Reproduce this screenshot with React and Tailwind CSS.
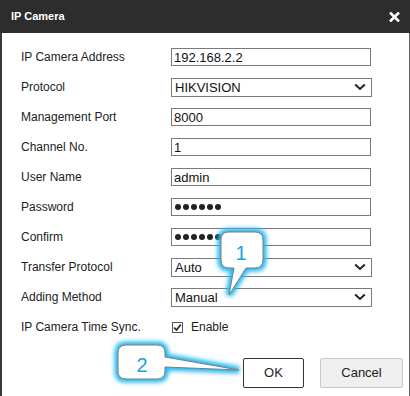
import React from "react";

const Chevron = () => (
  <svg width="12" height="8" viewBox="0 0 12 8" className="absolute right-[5px] top-1/2 -translate-y-1/2">
    <path d="M1.2 1.5 L6 6 L10.8 1.5" fill="none" stroke="#222" strokeWidth="2" />
  </svg>
);

const Input = ({ children }) => (
  <div className="w-[200px] h-[18px] border border-[#7a7a7a] bg-white flex items-center pl-[2px] text-[13px] text-[#111] leading-none">
    {children}
  </div>
);

const Select = ({ children }) => (
  <div className="relative w-[201px] h-[19px] border border-[#7a7a7a] bg-white flex items-center pl-[3px] text-[13px] text-[#111] leading-none">
    {children}
    <Chevron />
  </div>
);

const Dots = () => (
  <div className="flex gap-[2px] pl-[1px]">
    {[0, 1, 2, 3, 4, 5].map((i) => (
      <div key={i} className="w-[6px] h-[6px] rounded-full bg-[#222]" />
    ))}
  </div>
);

const Row = ({ label, children }) => (
  <div className="h-[30px] flex items-center">
    <div className="w-[169px] shrink-0 pl-[19px] text-[12px] text-[#222]">{label}</div>
    {children}
  </div>
);

export default function App() {
  return (
    <div
      className="relative w-[410px] h-[396px] overflow-hidden bg-white"
      style={{ fontFamily: '"Liberation Sans", Arial, sans-serif' }}
    >
      <div className="h-[33px] bg-[#2d2d2d] flex items-center justify-between pl-[11px] pr-[10px]">
        <span className="text-white font-bold text-[11px]">IP Camera</span>
        <svg width="11" height="10" viewBox="0 0 11 10">
          <path d="M1 0.5 L10 9.5 M10 0.5 L1 9.5" stroke="white" strokeWidth="2.6" />
        </svg>
      </div>
      <div className="h-[363px] border-l-2 border-l-[#3a3a3a] border-r border-r-[#666] pt-[9px] flex flex-col">
        <Row label="IP Camera Address"><Input>192.168.2.2</Input></Row>
        <Row label="Protocol"><Select>HIKVISION</Select></Row>
        <Row label="Management Port"><Input>8000</Input></Row>
        <Row label="Channel No."><Input>1</Input></Row>
        <Row label="User Name"><Input>admin</Input></Row>
        <Row label="Password"><Input><Dots /></Input></Row>
        <Row label="Confirm"><Input><Dots /></Input></Row>
        <Row label="Transfer Protocol"><Select>Auto</Select></Row>
        <Row label="Adding Method"><Select>Manual</Select></Row>
        <Row label="IP Camera Time Sync.">
          <div className="flex items-center">
            <div className="ml-[1px] w-[11px] h-[11px] border border-[#555] bg-white flex items-center justify-center">
              <svg width="9" height="9" viewBox="0 0 9 9">
                <path d="M1.2 4.6 L3.5 7 L7.8 1.5" fill="none" stroke="#222" strokeWidth="1.6" />
              </svg>
            </div>
            <span className="ml-[8px] text-[12px] text-[#222]">Enable</span>
          </div>
        </Row>
        <div className="mt-[16px] h-[30px] flex justify-end gap-[16px] pr-[6px]">
          <div className="w-[61px] h-[30px] border border-[#333] rounded-[2px] bg-white flex items-center justify-center text-[13px] text-[#222]">
            OK
          </div>
          <div className="w-[83px] h-[30px] border border-[#c8c8c8] rounded-[2px] bg-[#efefef] flex items-center justify-center text-[13px] text-[#222]">
            Cancel
          </div>
        </div>
      </div>

      <svg className="absolute inset-0 pointer-events-none" width="410" height="396" viewBox="0 0 410 396">
        <defs>
          <filter id="glow" x="-30%" y="-30%" width="160%" height="160%">
            <feGaussianBlur stdDeviation="2.2" />
          </filter>
        </defs>
        {[
          "M229,232 H255 Q263,232 263,240 V260 Q263,268 255,268 H246 L229,295 L234,268 H229 Q221,268 221,260 V240 Q221,232 229,232 Z",
          "M126,345 H157 Q165,345 165,353 V357 L239,370 L165,367 V371 Q165,379 157,379 H126 Q118,379 118,371 V353 Q118,345 126,345 Z",
        ].map((d, i) => (
          <g key={i}>
            <path d={d} fill="none" stroke="#22b8f0" strokeWidth="7" filter="url(#glow)" />
            <path d={d} fill="white" stroke="#7d7d7d" strokeWidth="1" />
          </g>
        ))}
        <text x="241" y="260" textAnchor="middle" fontSize="20" fill="#1e9fdc" fontFamily="Liberation Sans, Arial, sans-serif">1</text>
        <text x="142" y="372" textAnchor="middle" fontSize="20" fill="#1e9fdc" fontFamily="Liberation Sans, Arial, sans-serif">2</text>
      </svg>
    </div>
  );
}
